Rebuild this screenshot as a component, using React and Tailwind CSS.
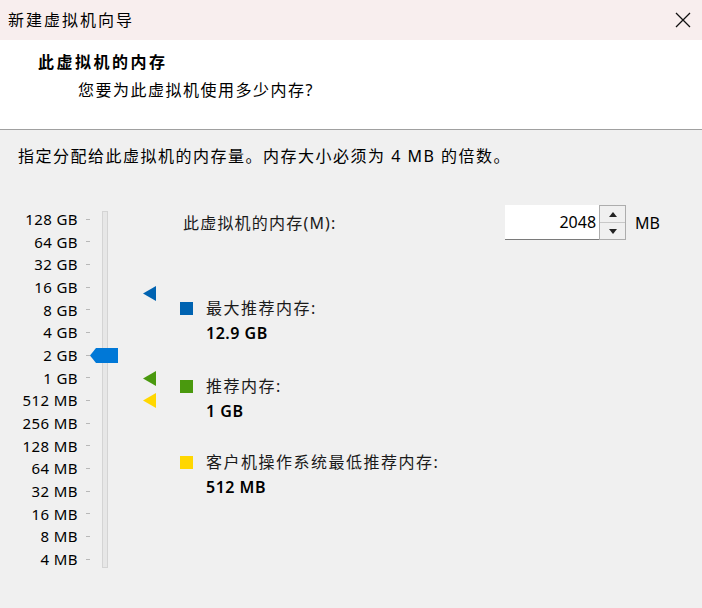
import React from "react";

const FONT = { fontFamily: '"Noto Sans", "Noto Sans CJK SC", sans-serif' };

const scale = [
  "128 GB", "64 GB", "32 GB", "16 GB", "8 GB", "4 GB", "2 GB", "1 GB",
  "512 MB", "256 MB", "128 MB", "64 MB", "32 MB", "16 MB", "8 MB", "4 MB",
];

const Triangle = ({ color, top }) => (
  <svg className="absolute left-[143px]" style={{ top }} width="13" height="15" viewBox="0 0 13 15">
    <polygon points="13,0 13,15 0,7.5" fill={color} />
  </svg>
);

const Legend = ({ color, label, value, className }) => (
  <div className={"flex " + className}>
    <div className={"w-[13px] h-[13px] mt-[1px] " + color} />
    <div className="ml-[13px]">
      <div className="text-[16px] leading-[14px] tracking-[1.5px] text-[#1a1a1a]">{label}</div>
      <div className="text-[16px] leading-[20px] mt-[8px] tracking-[0.5px] font-semibold text-black">{value}</div>
    </div>
  </div>
);

export default function App() {
  return (
    <div className="w-[702px] h-[608px] bg-[#f0f0f0] text-black overflow-hidden" style={FONT}>
      {/* title bar */}
      <div className="h-[40px] bg-[#f8eeee] flex items-center justify-between pl-[8px] pr-[11px]">
        <span className="text-[16px] tracking-[2px] text-black">新建虚拟机向导</span>
        <svg width="16" height="16" viewBox="0 0 16 16">
          <path d="M1 1 L15 15 M15 1 L1 15" stroke="#111" strokeWidth="1.3" />
        </svg>
      </div>

      {/* header */}
      <div className="h-[90px] bg-white border-b border-[#a0a0a0] pl-[38px] pt-[11px]">
        <div className="text-[16px] font-bold tracking-[2.5px] leading-[22px]">此虚拟机的内存</div>
        <div className="text-[16px] leading-[22px] tracking-[1.5px] mt-[6px] pl-[40px]">您要为此虚拟机使用多少内存?</div>
      </div>

      {/* body */}
      <div className="pl-[18px] pt-[16px] text-[16px] tracking-[1.5px] leading-[20px]">
        指定分配给此虚拟机的内存量。内存大小必须为 4 MB 的倍数。
      </div>

      <div className="flex mt-[42px]">
        {/* slider */}
        <div className="relative flex w-[180px] h-[365px] shrink-0">
          <div className="w-[78px] flex flex-col">
            {scale.map((s) => (
              <div key={s} className="h-[22.67px] text-[15px] tracking-[0.4px] leading-[22.67px] text-right text-black">
                {s}
              </div>
            ))}
          </div>
          <div className="ml-[8px] w-[4px] flex flex-col">
            {scale.map((s) => (
              <div key={s} className="h-[22.67px] flex items-center">
                <div className="w-[4px] h-px bg-[#b8b8b8]" />
              </div>
            ))}
          </div>
          <div className="ml-[12px] mt-[3px] w-[6px] h-[357px] bg-[#e7e7e7] border border-[#d4d4d4]" />

          <svg className="absolute left-[90px] top-[140px]" width="28" height="15" viewBox="0 0 28 15">
            <polygon points="6,0 28,0 28,15 6,15 0,7.5" fill="#0078d7" />
          </svg>
          <Triangle color="#0063b1" top={78} />
          <Triangle color="#4a990e" top={163} />
          <Triangle color="#ffd700" top={185} />
        </div>

        {/* right column */}
        <div className="flex-1">
          <div className="flex items-center h-[35px] -mt-[3px]">
            <span className="ml-[3px] text-[16px] tracking-[1.2px] text-[#1a1a1a]">此虚拟机的内存(M):</span>
            <div className="ml-auto flex h-[35px] mr-[42px]">
              <div className="w-[94px] bg-white border-b border-[#7a7a7a] flex items-center justify-end pr-[3px] text-[16px]">
                2048
              </div>
              <div className="w-[27px] flex flex-col border border-[#adadad] bg-[#f0f0f0]">
                <div className="flex-1 flex items-center justify-center border-b border-[#c8c8c8]">
                  <svg width="8" height="5" viewBox="0 0 8 5"><polygon points="4,0 8,5 0,5" fill="#222" /></svg>
                </div>
                <div className="flex-1 flex items-center justify-center">
                  <svg width="8" height="5" viewBox="0 0 8 5"><polygon points="0,0 8,0 4,5" fill="#222" /></svg>
                </div>
              </div>
              <span className="ml-[9px] self-center text-[16px]">MB</span>
            </div>
          </div>

          <Legend className="mt-[61px]" color="bg-[#0063b1]" label="最大推荐内存:" value="12.9 GB" />
          <Legend className="mt-[36px]" color="bg-[#4a990e]" label="推荐内存:" value="1 GB" />
          <Legend className="mt-[34px]" color="bg-[#ffd700]" label="客户机操作系统最低推荐内存:" value="512 MB" />
        </div>
      </div>
    </div>
  );
}
